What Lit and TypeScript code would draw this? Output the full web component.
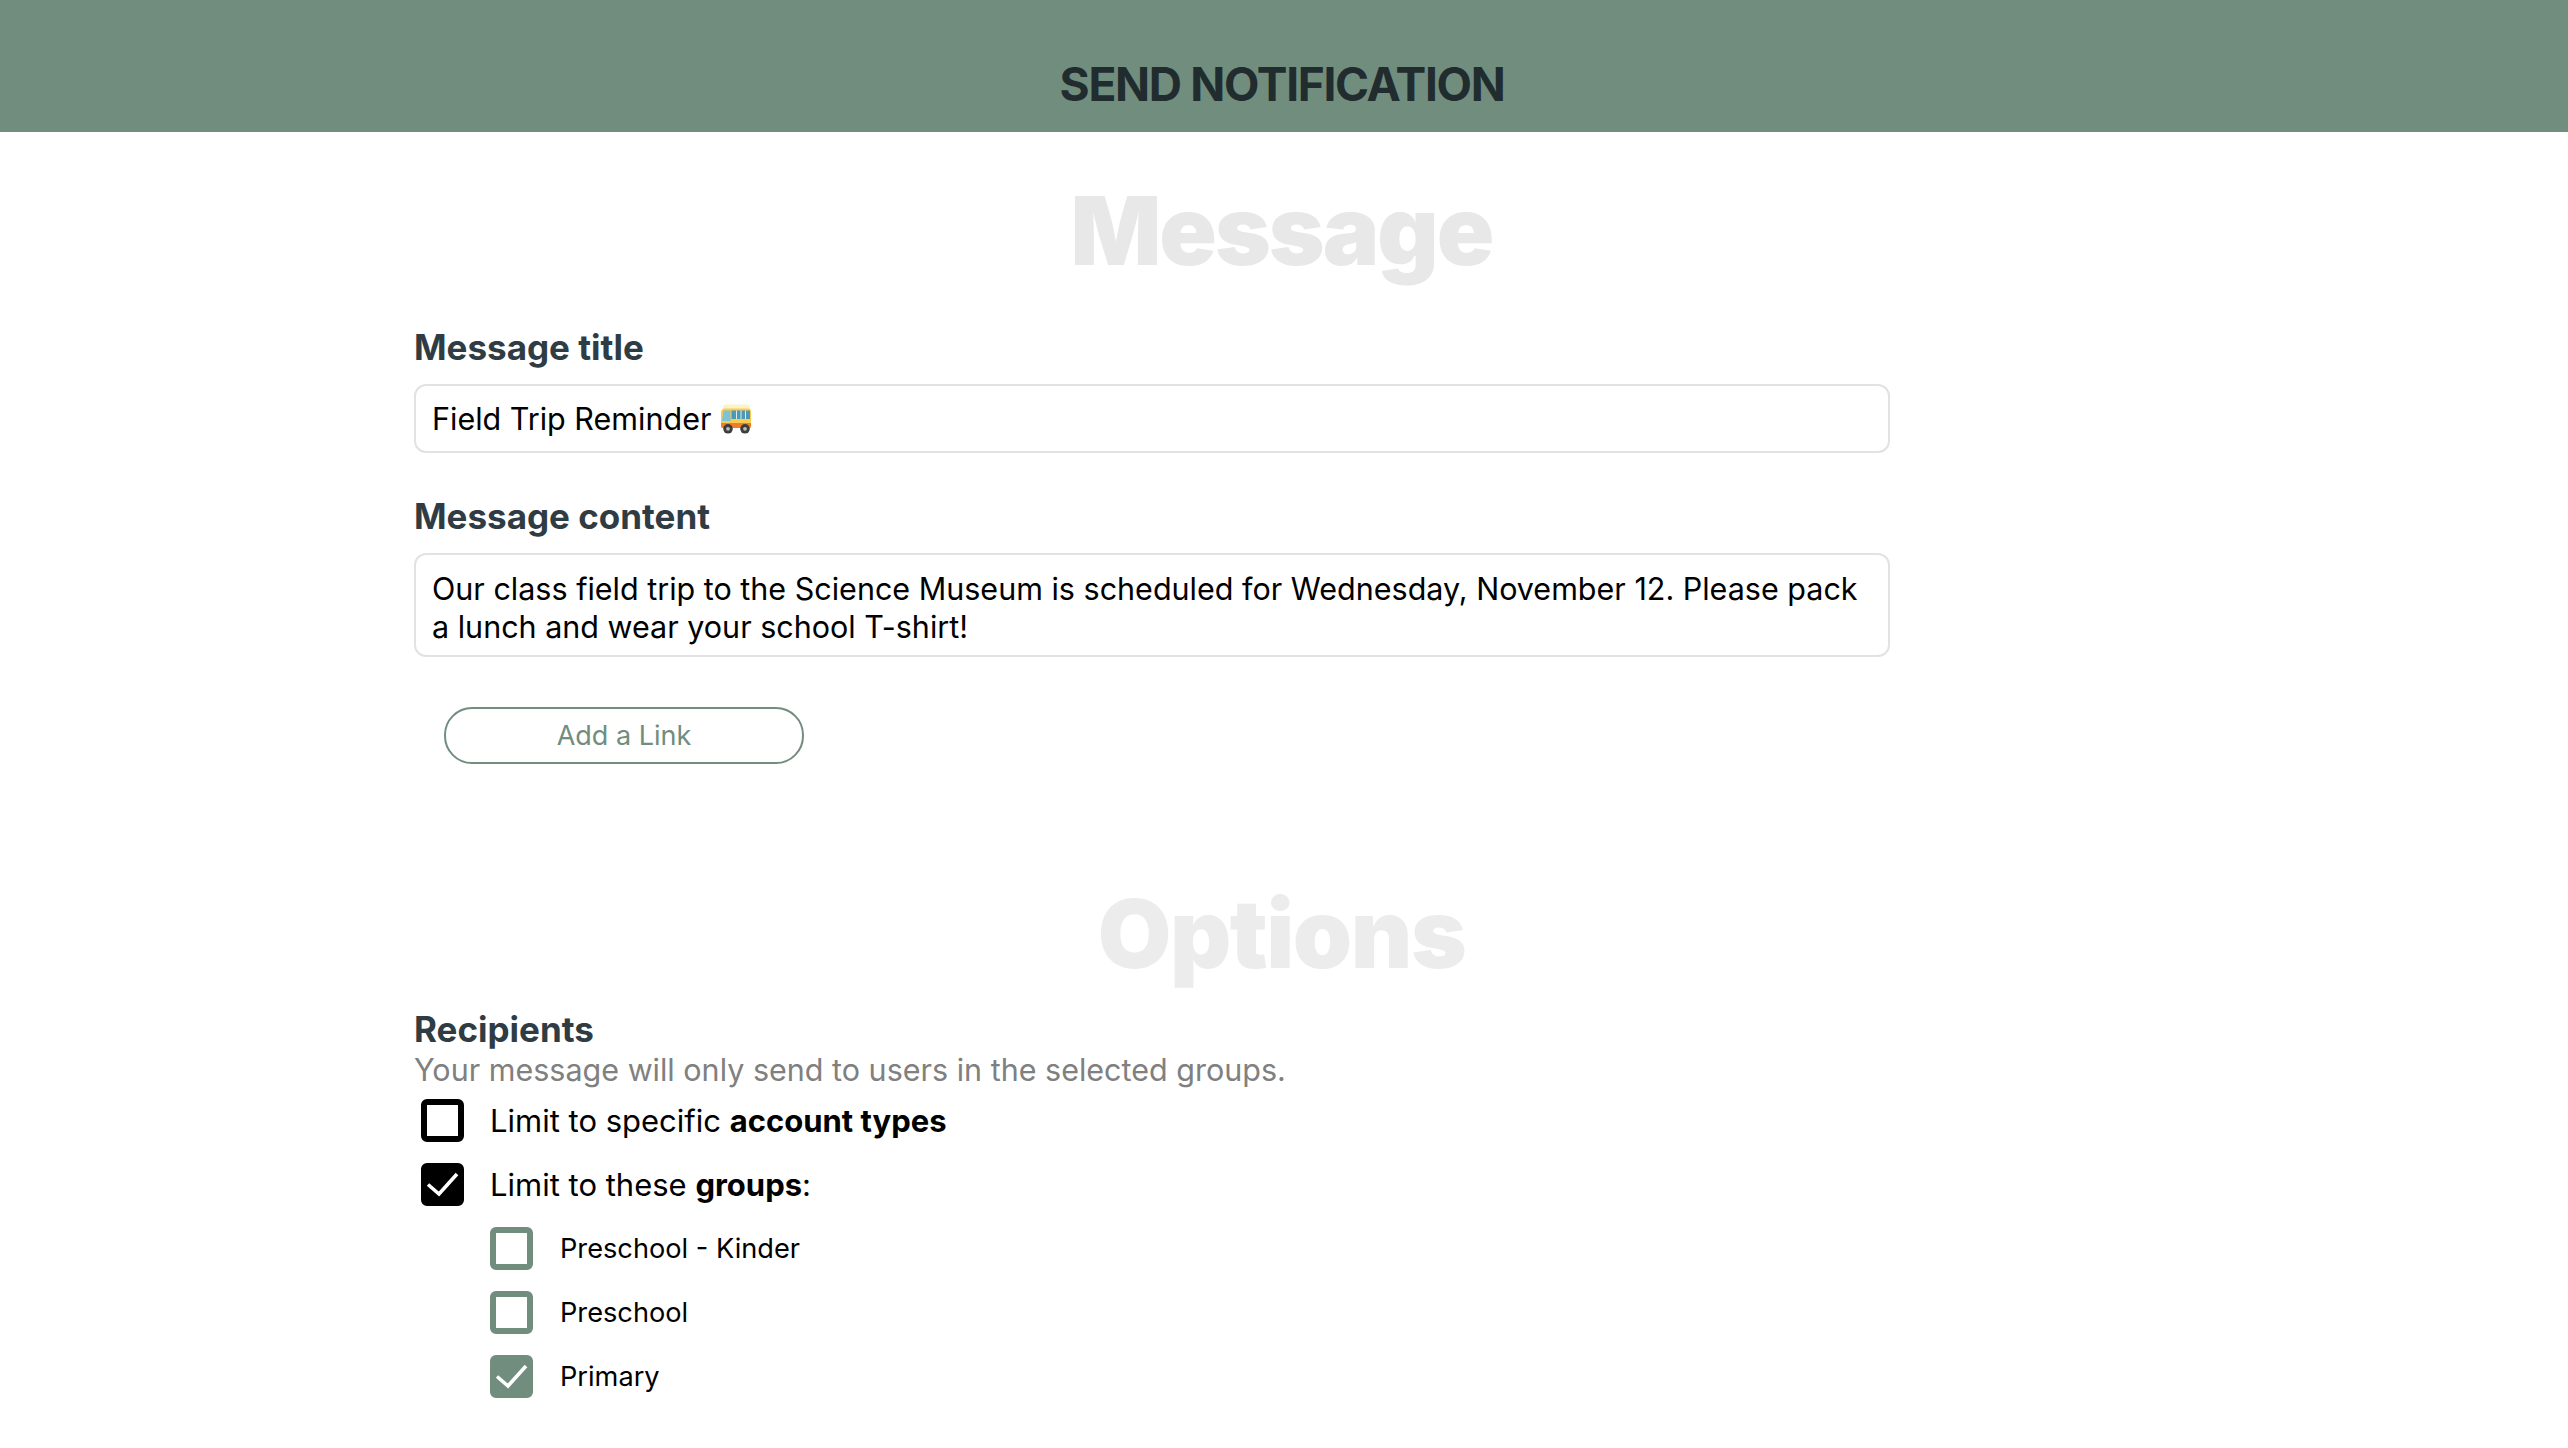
import { LitElement, html, css } from "lit";
import { customElement } from "lit/decorators.js";

const check = html`<svg class="tick" viewBox="0 0 43 43"><path d="M7 21.5 L18 31 L36 11" fill="none" stroke="#fff" stroke-width="3.6"/></svg>`;
const bus = html`<svg class="bus" viewBox="0 0 32 30" aria-hidden="true">
  <path d="M3 3Q3 .5 6 .5H27Q30 .5 30 3V6H3Z" fill="#fbf2c8"/>
  <path d="M1 8Q1.5 4.5 5 4.5H28Q31 4.5 31 8V22Q31 24 29 24H3Q1 24 1 22Z" fill="#fbcb4e"/>
  <path d="M1 19H31V22Q31 24 29 24H3Q1 24 1 22Z" fill="#ee7d2c"/>
  <path d="M3.5 6.5H10.5V17H2Z" fill="#7cc3d8"/>
  <path d="M11.5 6.5H30V15H11.5Z" fill="#4f97b4"/>
  <path d="M16.5 6.5V15M21 6.5V15M25.5 6.5V15" stroke="#d9eef2" stroke-width="1"/>
  <circle cx="8" cy="24.8" r="4.8" fill="#3d3d3d"/><circle cx="8" cy="24.8" r="1.9" fill="#bbb"/>
  <circle cx="25" cy="24.8" r="4.8" fill="#3d3d3d"/><circle cx="25" cy="24.8" r="1.9" fill="#bbb"/>
</svg>`;

@customElement("app-root")
export class AppRoot extends LitElement {
  static styles = css`
    :host { display: block; width: 2568px; height: 1448px; overflow: hidden; background: #fff; font-family: Inter, "Liberation Sans", sans-serif; color: #000; }
    header { height: 132px; background: #718d7e; box-sizing: border-box; padding: 55px 4px 0 0; text-align: center; font-size: 46px; line-height: 59px; font-weight: 700; color: #212c2e; letter-spacing: -1.3px; }
    h2 { margin: 0; padding-right: 5px; text-align: center; font-size: 95px; line-height: 116px; font-weight: 900; color: #e8e8e8; letter-spacing: -2px; }
    .msg-h { padding-top: 41px; }
    .opt-h { margin-top: 112px; color: #ececec; letter-spacing: -1.5px; }
    .form { width: 1476px; margin-left: 414px; }
    label, .label { display: block; font-size: 35px; line-height: 44px; font-weight: 700; color: #2f3c44; }
    .first { margin-top: 36px; }
    .second { margin-top: 41px; }
    .field { margin-top: 15px; box-sizing: border-box; width: 100%; border: 2px solid #e2e2e2; border-radius: 12px; padding: 0 16px; font-size: 30.5px; line-height: 38px; }
    .one { height: 69px; display: flex; align-items: center; gap: 9px; }
    .two { height: 104px; padding-top: 15px; }
    .bus { width: 32px; height: 30px; }
    button { display: block; margin: 50px 0 0 30px; width: 360px; height: 57px; background: #fff; border: 2px solid #718d7e; border-radius: 28px; font: 400 27px Inter, sans-serif; color: #718d7e; padding: 0; }
    .recip { margin-top: 15px; }
    .hint { font-size: 30.5px; line-height: 38px; color: #808080; }
    .rows { display: flex; flex-direction: column; gap: 21px; margin-top: 10px; }
    .row { display: flex; align-items: center; height: 43px; font-size: 31px; padding-left: 7px; gap: 26px; }
    .sub { font-size: 27.2px; padding-left: 76px; gap: 27px; }
    .box { width: 43px; height: 43px; box-sizing: border-box; border: 6px solid #000; border-radius: 6px; flex: none; position: relative; }
    .box.on { background: #000; }
    .sub .box { border-color: #718d7e; }
    .sub .box.on { background: #718d7e; }
    .tick { position: absolute; left: -6px; top: -6px; width: 43px; height: 43px; }
    b { font-weight: 700; }
  `;

  render() {
    const row = (on: boolean, content: unknown, sub = false) => html`
      <div class="row ${sub ? "sub" : ""}"><span class="box ${on ? "on" : ""}">${on ? check : ""}</span><span>${content}</span></div>`;
    return html`
      <header>SEND NOTIFICATION</header>
      <h2 class="msg-h">Message</h2>
      <div class="form">
        <label class="first">Message title</label>
        <div class="field one"><span>Field Trip Reminder</span>${bus}</div>
        <label class="second">Message content</label>
        <div class="field two">Our class field trip to the Science Museum is scheduled for Wednesday, November 12. Please pack a lunch and wear your school T-shirt!</div>
        <button>Add a Link</button>
      </div>
      <h2 class="opt-h">Options</h2>
      <div class="form">
        <div class="label recip">Recipients</div>
        <div class="hint">Your message will only send to users in the selected groups.</div>
        <div class="rows">
          ${row(false, html`Limit to specific <b>account types</b>`)}
          ${row(true, html`Limit to these <b>groups</b>:`)}
          ${row(false, "Preschool - Kinder", true)}
          ${row(false, "Preschool", true)}
          ${row(true, "Primary", true)}
        </div>
      </div>
    `;
  }
}
